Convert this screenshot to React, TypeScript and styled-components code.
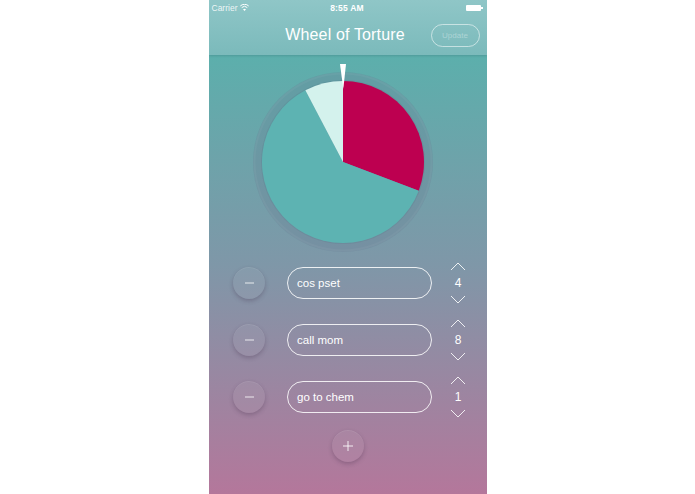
import styled, { createGlobalStyle } from "styled-components";

const GlobalStyle = createGlobalStyle`
  html, body {
    margin: 0;
    padding: 0;
    background: #ffffff;
  }
  body {
    font-family: "Liberation Sans", Arial, Helvetica, sans-serif;
  }
`;

type Task = { name: string; count: number };

const tasks: Task[] = [
  { name: "cos pset", count: 4 },
  { name: "call mom", count: 8 },
  { name: "go to chem", count: 1 },
];

const sliceColors = ["#bd0050", "#5db3b2", "#d4f2ed"];

const Screen = styled.div`
  width: 278px;
  height: 494px;
  margin: 0 auto;
  display: flex;
  flex-direction: column;
  overflow: hidden;
  color: #ffffff;
`;

const Header = styled.header`
  height: 55px;
  flex-shrink: 0;
  display: flex;
  flex-direction: column;
  background: linear-gradient(180deg, #8fc6c7 0%, #7bbabb 100%);
  box-shadow: 0 1px 2px rgba(40, 90, 95, 0.25);
  position: relative;
  z-index: 1;
`;

const StatusBar = styled.div`
  height: 15px;
  display: grid;
  grid-template-columns: 1fr auto 1fr;
  align-items: center;
  padding: 0 4px 0 3px;
  font-size: 8.5px;
`;

const Carrier = styled.div`
  display: flex;
  align-items: center;
  gap: 3px;
  color: rgba(255, 255, 255, 0.85);
`;

const Clock = styled.div`
  font-weight: bold;
  letter-spacing: 0.2px;
`;

const Battery = styled.div`
  justify-self: end;
  width: 15px;
  height: 6px;
  background: #ffffff;
  border-radius: 1px;
  position: relative;
  margin-right: 2px;

  &::after {
    content: "";
    position: absolute;
    right: -2px;
    top: 2px;
    width: 1.5px;
    height: 2px;
    background: #ffffff;
  }
`;

const NavBar = styled.div`
  flex: 1;
  display: grid;
  grid-template-columns: 1fr auto 1fr;
  align-items: center;
  padding-right: 7px;
`;

const Title = styled.h1`
  grid-column: 2;
  margin: 0 0 0 2px;
  font-size: 16px;
  font-weight: normal;
  letter-spacing: 0.15px;
`;

const UpdateButton = styled.button`
  justify-self: end;
  width: 49px;
  height: 23px;
  border-radius: 12px;
  border: 1px solid rgba(255, 255, 255, 0.55);
  background: transparent;
  color: rgba(255, 255, 255, 0.35);
  font-family: inherit;
  font-size: 8px;
  padding: 0;
`;

const Main = styled.main`
  flex: 1;
  display: flex;
  flex-direction: column;
  align-items: center;
  background: linear-gradient(180deg, #5cafac 0%, #7f97a8 48%, #b4779b 100%);
`;

const WheelSvg = styled.svg`
  margin-top: 7px;
  margin-right: 9px;
  flex-shrink: 0;
`;

const TaskList = styled.div`
  align-self: stretch;
  display: flex;
  flex-direction: column;
  gap: 25px;
  margin-top: 13px;
`;

const Row = styled.div`
  height: 32px;
  display: flex;
  align-items: center;
  padding-left: 24.5px;
`;

const RoundButton = styled.button`
  width: 32px;
  height: 32px;
  border-radius: 50%;
  border: none;
  padding: 0;
  display: flex;
  align-items: center;
  justify-content: center;
  background: rgba(255, 255, 255, 0.05);
  box-shadow: 0 2px 4px rgba(60, 40, 70, 0.28), inset 0 1px 0 rgba(255, 255, 255, 0.08);
  flex-shrink: 0;
`;

const TaskField = styled.div`
  margin-left: 22px;
  width: 145px;
  height: 32px;
  box-sizing: border-box;
  border: 1.3px solid rgba(255, 255, 255, 0.85);
  border-radius: 16px;
  display: flex;
  align-items: center;
  padding-left: 9px;
  font-size: 11.5px;
`;

const Stepper = styled.div`
  margin-left: 15px;
  width: 22px;
  display: flex;
  flex-direction: column;
  align-items: center;
  gap: 6px;
  flex-shrink: 0;
`;

const Count = styled.span`
  font-size: 12px;
  line-height: 12px;
`;

const AddRow = styled.div`
  display: flex;
  justify-content: center;
  margin-top: 17px;
`;

const Chevron = ({ up }: { up: boolean }) => (
  <svg width="16" height="9" viewBox="0 0 16 9">
    <polyline
      points={up ? "1,8 8,1 15,8" : "1,1 8,8 15,1"}
      fill="none"
      stroke="rgba(255,255,255,0.85)"
      strokeWidth="1"
    />
  </svg>
);

const Wifi = () => (
  <svg width="9" height="7" viewBox="0 0 9 7">
    <path d="M4.5 7 L6 5.3 A2.3 2.3 0 0 0 3 5.3 Z" fill="#fff" />
    <path d="M1.7 3.6 A4 4 0 0 1 7.3 3.6" stroke="#fff" strokeWidth="1" fill="none" />
    <path d="M0.3 2 A6 6 0 0 1 8.7 2" stroke="#fff" strokeWidth="1" fill="none" />
  </svg>
);

const Minus = () => (
  <svg width="9" height="2" viewBox="0 0 9 2">
    <line x1="0" y1="1" x2="9" y2="1" stroke="rgba(255,255,255,0.8)" strokeWidth="1" />
  </svg>
);

const Plus = () => (
  <svg width="10" height="10" viewBox="0 0 10 10">
    <line x1="0" y1="5" x2="10" y2="5" stroke="rgba(255,255,255,0.85)" strokeWidth="1" />
    <line x1="5" y1="0" x2="5" y2="10" stroke="rgba(255,255,255,0.85)" strokeWidth="1" />
  </svg>
);

const CX = 96;
const CY = 100;
const R = 81;

const point = (deg: number) => {
  const rad = (deg * Math.PI) / 180;
  return `${CX + R * Math.sin(rad)} ${CY - R * Math.cos(rad)}`;
};

const Wheel = ({ items }: { items: Task[] }) => {
  const total = items.reduce((s, t) => s + t.count, 0);
  let start = 0;
  const slices = items.map((t, i) => {
    const sweep = (t.count / total) * 360;
    const end = start + sweep;
    const d = `M ${CX} ${CY} L ${point(start)} A ${R} ${R} 0 ${sweep > 180 ? 1 : 0} 1 ${point(end)} Z`;
    start = end;
    return <path key={t.name} d={d} fill={sliceColors[i % sliceColors.length]} />;
  });

  return (
    <WheelSvg width="192" height="192" viewBox="0 0 192 192">
      <circle cx={CX} cy={CY} r="90" fill="rgba(105,128,148,0.32)" />
      <circle cx={CX} cy={CY} r="88.5" fill="none" stroke="rgba(255,255,255,0.04)" strokeWidth="2" />
      <circle cx={CX} cy={CY} r="82" fill="rgba(60,90,110,0.1)" />
      {slices}
      <polygon points="93,2 99,2 96.3,27" fill="#ffffff" />
    </WheelSvg>
  );
};

export default function App() {
  return (
    <>
      <GlobalStyle />
      <Screen>
        <Header>
          <StatusBar>
            <Carrier>
              Carrier <Wifi />
            </Carrier>
            <Clock>8:55 AM</Clock>
            <Battery />
          </StatusBar>
          <NavBar>
            <Title>Wheel of Torture</Title>
            <UpdateButton>Update</UpdateButton>
          </NavBar>
        </Header>
        <Main>
          <Wheel items={tasks} />
          <TaskList>
            {tasks.map((t) => (
              <Row key={t.name}>
                <RoundButton>
                  <Minus />
                </RoundButton>
                <TaskField>{t.name}</TaskField>
                <Stepper>
                  <Chevron up />
                  <Count>{t.count}</Count>
                  <Chevron up={false} />
                </Stepper>
              </Row>
            ))}
          </TaskList>
          <AddRow>
            <RoundButton>
              <Plus />
            </RoundButton>
          </AddRow>
        </Main>
      </Screen>
    </>
  );
}
